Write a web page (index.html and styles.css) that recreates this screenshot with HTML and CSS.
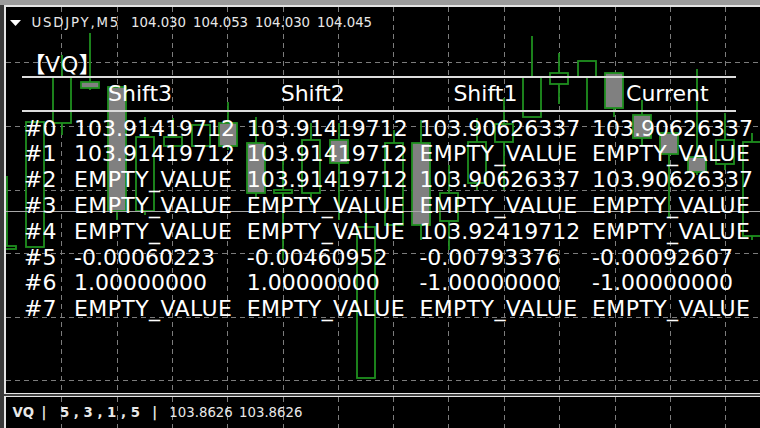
FILE: index.html
```html
<!DOCTYPE html>
<html>
<head>
<meta charset="utf-8">
<link rel="stylesheet" href="styles.css">
</head>
<body>
<div class="frame">
  <div class="chart">
    <svg class="canvas" width="754" height="386" viewBox="6 7 754 386">
      <g class="grid">
        <line x1="61.5" y1="7" x2="61.5" y2="393"/>
        <line x1="117.5" y1="7" x2="117.5" y2="393"/>
        <line x1="172.5" y1="7" x2="172.5" y2="393"/>
        <line x1="227.5" y1="7" x2="227.5" y2="393"/>
        <line x1="283.5" y1="7" x2="283.5" y2="393"/>
        <line x1="338.5" y1="7" x2="338.5" y2="393"/>
        <line x1="393.5" y1="7" x2="393.5" y2="393"/>
        <line x1="448.5" y1="7" x2="448.5" y2="393"/>
        <line x1="504.5" y1="7" x2="504.5" y2="393"/>
        <line x1="559.5" y1="7" x2="559.5" y2="393"/>
        <line x1="615.5" y1="7" x2="615.5" y2="393"/>
        <line x1="670.5" y1="7" x2="670.5" y2="393"/>
        <line x1="725.5" y1="7" x2="725.5" y2="393"/>
        <line x1="6" y1="62.5" x2="760" y2="62.5"/>
        <line x1="6" y1="126.5" x2="760" y2="126.5"/>
        <line x1="6" y1="190.5" x2="760" y2="190.5"/>
        <line x1="6" y1="253.5" x2="760" y2="253.5"/>
        <line x1="6" y1="317.5" x2="760" y2="317.5"/>
        <line x1="6" y1="380.5" x2="760" y2="380.5"/>
      </g>
      <g class="wicks">
        <line x1="7" y1="176" x2="7" y2="250"/>
        <line x1="62" y1="55" x2="62" y2="135"/>
        <line x1="90" y1="33" x2="90" y2="90"/>
        <line x1="117" y1="87" x2="117" y2="220"/>
        <line x1="145" y1="117" x2="145" y2="215"/>
        <line x1="173" y1="118" x2="173" y2="150"/>
        <line x1="228" y1="102" x2="228" y2="150"/>
        <line x1="256" y1="117" x2="256" y2="197"/>
        <line x1="283" y1="160" x2="283" y2="260"/>
        <line x1="311" y1="123" x2="311" y2="205"/>
        <line x1="339" y1="123" x2="339" y2="220"/>
        <line x1="366" y1="200" x2="366" y2="378"/>
        <line x1="394" y1="130" x2="394" y2="230"/>
        <line x1="421" y1="120" x2="421" y2="240"/>
        <line x1="449" y1="165" x2="449" y2="250"/>
        <line x1="477" y1="118" x2="477" y2="190"/>
        <line x1="504" y1="98" x2="504" y2="190"/>
        <line x1="532" y1="36" x2="532" y2="117"/>
        <line x1="559" y1="53" x2="559" y2="104"/>
        <line x1="587" y1="61" x2="587" y2="110"/>
        <line x1="614" y1="73" x2="614" y2="117"/>
        <line x1="642" y1="100" x2="642" y2="145"/>
        <line x1="669" y1="133" x2="669" y2="217"/>
        <line x1="697" y1="69" x2="697" y2="175"/>
        <line x1="725" y1="113" x2="725" y2="170"/>
        <line x1="752" y1="133" x2="752" y2="240"/>
      </g>
      <g class="bodies">
        <rect class="up" x="-2" y="246" width="18" height="3"/>
        <rect class="up" x="26" y="122" width="18" height="125"/>
        <rect class="up" x="53" y="77" width="18" height="46"/>
        <rect class="dn" x="81" y="82" width="18" height="6"/>
        <rect class="dn" x="108" y="87" width="18" height="124"/>
        <rect class="up" x="136" y="137" width="18" height="74"/>
        <rect class="up" x="164" y="137" width="18" height="9"/>
        <rect class="up" x="192" y="125" width="18" height="21"/>
        <rect class="dn" x="219" y="123" width="18" height="23"/>
        <rect class="dn" x="247" y="143" width="18" height="50"/>
        <rect class="up" x="274" y="190" width="18" height="3"/>
        <rect class="up" x="302" y="140" width="18" height="53"/>
        <rect class="dn" x="330" y="140" width="18" height="23"/>
        <rect class="up" x="357" y="227" width="18" height="151"/>
        <rect class="up" x="385" y="143" width="18" height="82"/>
        <rect class="dn" x="412" y="143" width="18" height="82"/>
        <rect class="up" x="440" y="193" width="18" height="28"/>
        <rect class="up" x="468" y="142" width="18" height="41"/>
        <rect class="up" x="495" y="124" width="18" height="18"/>
        <rect class="up" x="523" y="77" width="18" height="40"/>
        <rect class="up" x="550" y="73" width="18" height="11"/>
        <rect class="up" x="578" y="61" width="18" height="16"/>
        <rect class="dn" x="605" y="73" width="18" height="35"/>
        <rect class="dn" x="633" y="115" width="18" height="23"/>
        <rect class="dn" x="660" y="133" width="18" height="21"/>
        <rect class="dn" x="688" y="157" width="18" height="15"/>
        <rect class="up" x="716" y="140" width="18" height="24"/>
        <rect class="up" x="743" y="142" width="18" height="94"/>
      </g>
      <line class="bid" x1="6" y1="211.5" x2="760" y2="211.5"/>
    </svg>

    <div class="overlay">
      <div class="title">
        <svg class="tri" width="11" height="6" viewBox="0 0 11 6"><polygon points="0,0 11,0 5.5,6"/></svg>
        <span class="sym">USDJPY,M5</span><span class="ohlc">104.030 104.053 104.030 104.045</span>
      </div>
      <div class="label"><span class="br">【</span>VQ<span class="br">】</span></div>
      <div class="hr first"></div>
      <div class="head">
        <span></span><span>Shift3</span><span>Shift2</span><span>Shift1</span><span>Current</span>
      </div>
      <div class="hr"></div>
      <div class="rows">
        <span>#0</span><span>103.91419712</span><span>103.91419712</span><span>103.90626337</span><span>103.90626337</span>
        <span>#1</span><span>103.91419712</span><span>103.91419712</span><span class="ev">EMPTY_VALUE</span><span class="ev">EMPTY_VALUE</span>
        <span>#2</span><span class="ev">EMPTY_VALUE</span><span>103.91419712</span><span>103.90626337</span><span>103.90626337</span>
        <span>#3</span><span class="ev">EMPTY_VALUE</span><span class="ev">EMPTY_VALUE</span><span class="ev">EMPTY_VALUE</span><span class="ev">EMPTY_VALUE</span>
        <span>#4</span><span class="ev">EMPTY_VALUE</span><span class="ev">EMPTY_VALUE</span><span>103.92419712</span><span class="ev">EMPTY_VALUE</span>
        <span>#5</span><span>-0.00060223</span><span>-0.00460952</span><span>-0.00793376</span><span>-0.00092607</span>
        <span>#6</span><span>1.00000000</span><span>1.00000000</span><span>-1.00000000</span><span>-1.00000000</span>
        <span>#7</span><span class="ev">EMPTY_VALUE</span><span class="ev">EMPTY_VALUE</span><span class="ev">EMPTY_VALUE</span><span class="ev">EMPTY_VALUE</span>
      </div>
    </div>
  </div>
  <div class="sep"></div>
  <div class="sub">
    <svg class="subgrid" width="754" height="31" viewBox="6 397 754 31">
      <g class="grid">
        <line x1="61.5" y1="397" x2="61.5" y2="428"/>
        <line x1="117.5" y1="397" x2="117.5" y2="428"/>
        <line x1="172.5" y1="397" x2="172.5" y2="428"/>
        <line x1="227.5" y1="397" x2="227.5" y2="428"/>
        <line x1="283.5" y1="397" x2="283.5" y2="428"/>
        <line x1="338.5" y1="397" x2="338.5" y2="428"/>
        <line x1="393.5" y1="397" x2="393.5" y2="428"/>
        <line x1="448.5" y1="397" x2="448.5" y2="428"/>
        <line x1="504.5" y1="397" x2="504.5" y2="428"/>
        <line x1="559.5" y1="397" x2="559.5" y2="428"/>
        <line x1="615.5" y1="397" x2="615.5" y2="428"/>
        <line x1="670.5" y1="397" x2="670.5" y2="428"/>
        <line x1="725.5" y1="397" x2="725.5" y2="428"/>
      </g>
    </svg>
    <div class="legend"><span class="sn">VQ</span><span class="bar">|</span><span class="params">5 , 3 , 1 , 5</span><span class="bar b2">|</span><span class="vals">103.8626 103.8626</span></div>
  </div>
</div>
</body>
</html>
```
FILE: styles.css
```css
html, body {
  margin: 0;
  padding: 0;
}
body {
  width: 760px;
  height: 428px;
  overflow: hidden;
  background: #3a3a3a;
  font-family: "DejaVu Sans", "Noto Sans CJK JP", sans-serif;
  color: #ffffff;
}
.frame {
  border-top: 5px solid #9c9c9c;
  padding-left: 4px;
  height: 423px;
}
.chart {
  position: relative;
  height: 386px;
  background: #000;
  border-top: 2px solid #e4e4e4;
  border-left: 2px solid #e4e4e4;
  border-bottom: 1px solid #e4e4e4;
  overflow: hidden;
}
.canvas, .subgrid {
  position: absolute;
  left: 0;
  top: 0;
  display: block;
}
.grid line {
  stroke: #7c7c7c;
  stroke-width: 1;
  stroke-dasharray: 5 4;
}
.wicks line {
  stroke: #1f8f1f;
  stroke-width: 1.8;
}
.bodies rect {
  stroke: #1f8f1f;
  stroke-width: 1.8;
}
.bodies .up { fill: #000; }
.bodies .dn { fill: #808080; }
.bid {
  stroke: #a8a8a8;
  stroke-width: 1.2;
}
.overlay {
  position: absolute;
  left: 0;
  top: 0;
  right: 0;
}
.title {
  display: flex;
  align-items: center;
  height: 16px;
  margin: 8px 0 0 4px;
  font-size: 13.3px;
  line-height: 16px;
  color: #e8e8e8;
  white-space: pre;
}
.tri {
  display: block;
  margin-right: 10.5px;
}
.tri polygon { fill: #ffffff; }
.sym { letter-spacing: 1.8px; }
.ohlc { margin-left: 11px; word-spacing: 2.8px; }
.label {
  height: 26px;
  line-height: 26px;
  margin: 18px 0 0 28px;
  font-size: 22px;
  letter-spacing: 1px;
  white-space: nowrap;
}
.br {
  font-family: "Noto Sans CJK JP", sans-serif;
  font-feature-settings: "palt";
  letter-spacing: 0;
}
.hr {
  height: 2px;
  width: 714px;
  margin-left: 16px;
  background: #dcdcdc;
}
.hr.first { margin-top: 1px; }
.head, .rows {
  display: grid;
  grid-template-columns: 50px repeat(4, 172.7px);
  margin-left: 18px;
  font-size: 22px;
  white-space: nowrap;
}
.head {
  height: 32px;
  line-height: 32px;
}
.head span { padding-left: 34px; }
.rows {
  padding-top: 3.6px;
  grid-auto-rows: 25.8px;
  line-height: 25.8px;
}
.rows .ev { letter-spacing: 0.4px; }
.sep {
  height: 2px;
  background: #404040;
}
.sub {
  position: relative;
  height: 31px;
  background: #000;
  border-top: 1px solid #e4e4e4;
  border-left: 2px solid #e4e4e4;
  overflow: hidden;
}
.legend {
  position: relative;
  display: flex;
  align-items: center;
  height: 31px;
  padding-left: 6.5px;
  font-size: 13.3px;
  color: #e8e8e8;
  white-space: pre;
}
.sn, .bar, .params { font-weight: bold; }
.bar { margin-left: 7.3px; }
.params { margin-left: 13.7px; }
.b2 { margin-left: 12.4px; }
.vals { margin-left: 12.2px; word-spacing: 2px; }
```
